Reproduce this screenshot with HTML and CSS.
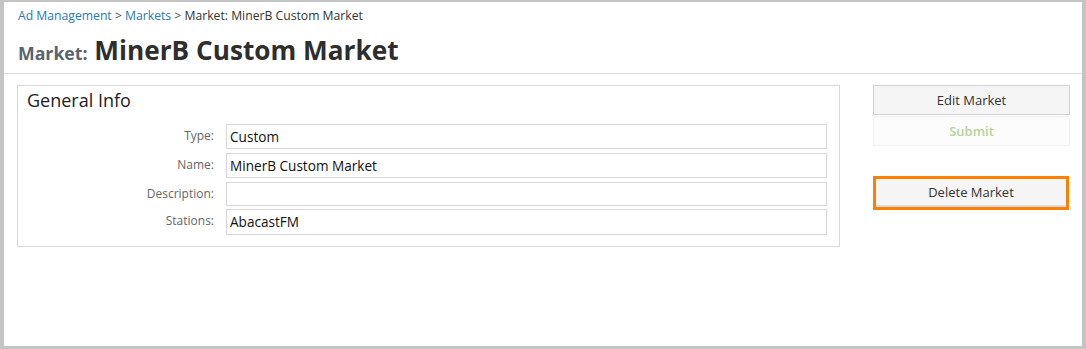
FILE: index.html
```html
<!DOCTYPE html>
<html>
<head>
<meta charset="utf-8">
<link rel="stylesheet" href="styles.css">
</head>
<body>
<div class="frame">
  <div class="header">
    <div class="crumbs"><a class="link">Ad Management</a> <span class="sep">&gt;</span> <a class="link">Markets</a> <span class="sep">&gt;</span> <span class="cur">Market: MinerB Custom Market</span></div>
    <h1 class="title"><span class="pre">Market:</span> MinerB Custom Market</h1>
  </div>
  <div class="content">
    <div class="box">
      <h2 class="box-title">General Info</h2>
      <div class="form">
        <div class="label">Type:</div><div class="field">Custom</div>
        <div class="label">Name:</div><div class="field">MinerB Custom Market</div>
        <div class="label">Description:</div><div class="field short"></div>
        <div class="label tall">Stations:</div><div class="field tall">AbacastFM</div>
      </div>
    </div>
    <div class="actions">
      <div class="btn">Edit Market</div>
      <div class="btn disabled">Submit</div>
      <div class="btn danger">Delete Market</div>
    </div>
  </div>
</div>
</body>
</html>
```

FILE: styles.css
```css
html, body {
  margin: 0;
  padding: 0;
  background: #fff;
}
body {
  font-family: "Open Sans", "DejaVu Sans", sans-serif;
  color: #333;
}
.frame {
  box-sizing: border-box;
  width: 1086px;
  height: 349px;
  border: 3px solid #c4c4c4;
  border-top-width: 2px;
  border-left-width: 4px;
  border-right-width: 4px;
  background: #fff;
}
.header {
  border-bottom: 1px solid #d9d9d9;
  padding: 5px 0 0 14px;
  height: 66px;
}
.crumbs {
  font-size: 12.2px;
  line-height: 18px;
  color: #444;
}
.link {
  color: #2479bd;
}
.sep {
  color: #555;
}
.cur {
  color: #333;
}
.title {
  margin: 9px 0 0 0;
  font-size: 26.2px;
  line-height: 32px;
  font-weight: 700;
  color: #2e2e2e;
}
.pre {
  font-size: 17.7px;
  color: #5a6470;
}
.content {
  display: flex;
  padding: 11px 0 0 13px;
  gap: 33px;
  align-items: flex-start;
}
.box {
  box-sizing: border-box;
  width: 823px;
  border: 1px solid #dad7de;
  padding: 0 12px 11px 9px;
}
.box-title {
  margin: 0;
  font-size: 18px;
  font-weight: 400;
  line-height: 24px;
  padding-top: 2px;
  color: #222;
  height: 36px;
}
.form {
  display: grid;
  grid-template-columns: 187px 1fr;
  column-gap: 12px;
  row-gap: 4px;
}
.label {
  text-align: right;
  font-size: 12px;
  color: #666;
  line-height: 24px;
}
.label.tall {
  margin-top: -1px;
}
.field {
  box-sizing: border-box;
  height: 25px;
  border: 1px solid #d8d5dc;
  padding: 0 3px;
  font-size: 13.6px;
  line-height: 23px;
  color: #111;
  font-weight: 500;
}
.field.short {
  height: 24px;
}
.field.tall {
  height: 26px;
  margin-top: -1px;
  line-height: 24px;
}
.actions {
  width: 197px;
  display: flex;
  flex-direction: column;
}
.btn {
  box-sizing: border-box;
  height: 30px;
  border: 1px solid #d4d0da;
  background: #f5f5f6;
  text-align: center;
  font-size: 13px;
  line-height: 28px;
  color: #333;
}
.btn.disabled {
  margin-top: 1px;
  border-color: #f0f0f0;
  background: #fcfcfc;
  color: #b4d49c;
  font-weight: 600;
}
.btn.danger {
  margin-top: 30px;
  height: 34px;
  border: 3px solid #ff7f00;
  line-height: 27px;
  width: 196px;
  box-shadow: inset 0 -2px 0 #dcd8e0;
}
```
